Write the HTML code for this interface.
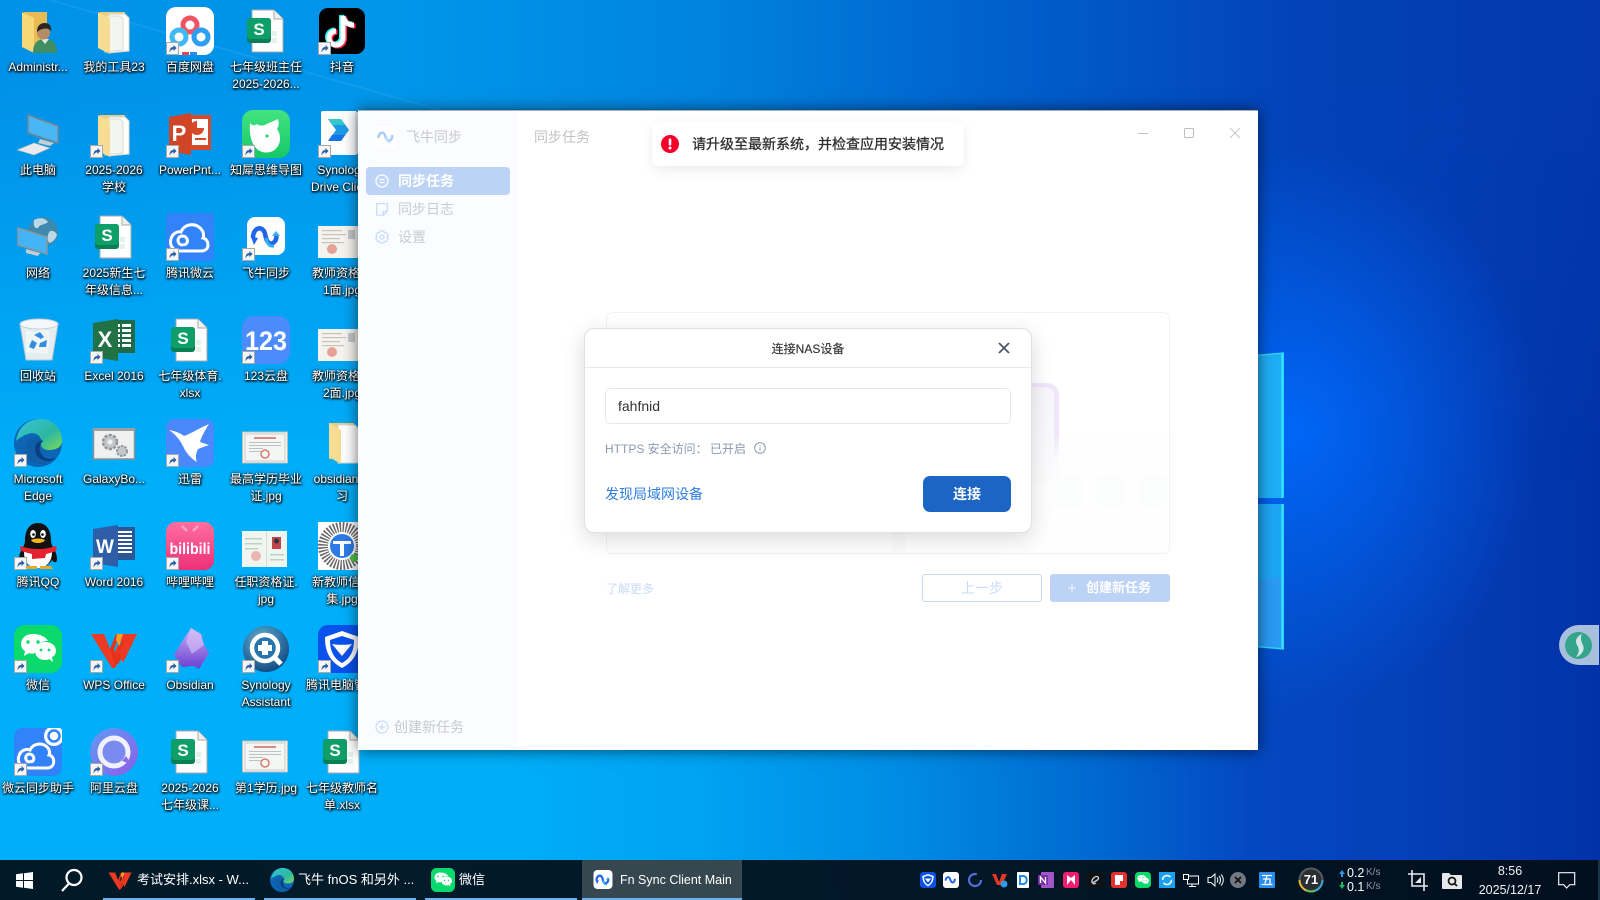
<!DOCTYPE html>
<html><head><meta charset="utf-8"><title>Fn Sync Client Main</title>
<style>
html,body{margin:0;padding:0;width:1600px;height:900px;overflow:hidden}
body{position:relative;font-family:"Liberation Sans","Noto Sans CJK SC",sans-serif;font-size:12px;
background:linear-gradient(90deg,#00aefa 0,#00aef8 500px,#00a2f2 700px,#008ce4 900px,#0068d0 1100px,#0448c0 1250px,#0440b8 1400px,#0232a8 1600px);}
.a{position:absolute}
svg{position:absolute;display:block;overflow:visible}
.l{position:absolute;width:76px;text-align:center;color:#fff;font-size:12px;line-height:17px;text-shadow:0 1px 2px #000,1px 1px 2px #000,0 0 3px rgba(0,0,0,.8);white-space:nowrap}
.t{position:absolute;white-space:nowrap}
.tb{position:absolute;top:860px;height:38px;border-bottom:2px solid #6cb1ea;color:#fff;font-size:13px;line-height:38px}
</style></head><body>
<div class="a" style="left:0;top:0;width:1600px;height:500px;background:linear-gradient(90deg,#0092e8 0,#0096ea 400px,#0084e0 700px,#0060cc 1000px,#0342b8 1300px,#0338ae 1600px);-webkit-mask-image:linear-gradient(180deg,#000 0,#000 90px,transparent 480px);mask-image:linear-gradient(180deg,#000 0,#000 90px,transparent 480px)"></div>
<div class="a" style="left:1040px;top:150px;width:500px;height:560px;background:radial-gradient(ellipse 250px 280px at 250px 280px,rgba(0,104,250,.95),rgba(0,100,240,0) 100%)"></div>
<svg width="0" height="0" style="position:absolute">
<defs>
<linearGradient id="gw" x1="0" y1="0" x2="0" y2="1"><stop offset="0" stop-color="#42e37f"/><stop offset="1" stop-color="#16c868"/></linearGradient>
<linearGradient id="gb" x1="0" y1="0" x2="0" y2="1"><stop offset="0" stop-color="#ff6f9f"/><stop offset="1" stop-color="#ee2f78"/></linearGradient>
<linearGradient id="ge" x1="0" y1="0" x2="1" y2="1"><stop offset="0" stop-color="#36c5d8"/><stop offset=".6" stop-color="#2cb7a0"/><stop offset="1" stop-color="#7cdc55"/></linearGradient>
<linearGradient id="gob" x1="0" y1="0" x2="0" y2="1"><stop offset="0" stop-color="#c7aef5"/><stop offset="1" stop-color="#6a3fd0"/></linearGradient>
<radialGradient id="gsa" cx=".4" cy=".3" r=".8"><stop offset="0" stop-color="#5fb1d6"/><stop offset="1" stop-color="#0b3f78"/></radialGradient>
<linearGradient id="gal" x1="0" y1="0" x2="1" y2="1"><stop offset="0" stop-color="#5e9cf2"/><stop offset="1" stop-color="#8c5de8"/></linearGradient>
<symbol id="sc" viewBox="0 0 13 13"><rect x=".5" y=".5" width="12" height="12" fill="#f4f6f8" stroke="#a8a8a8"/><path d="M3.500 10.500c0-4 1.500-5.500 4-5.500V3l3 3-3 3V7.200c-1.700 0-3 1-4 3.300z" fill="#2d5ea5"/></symbol>
<symbol id="ufolder" viewBox="0 0 48 48"><path d="M10 5h23v34H10z" fill="#e8bc55"/><path d="M8 5l12 6v35L8 40z" fill="#f6d878"/><path d="M19 46c0-9 4-14 12-14s12 5 12 14z" fill="#3f8f63"/><path d="M27 32l4 5 4-5z" fill="#dfe8df"/><circle cx="29.500" cy="26" r="6.500" fill="#b58c66"/><path d="M23 25c0-7 4-9 8-9s7 3 6 8c-2-3-8-4-14 1z" fill="#2b2720"/></symbol>
<symbol id="dfolder" viewBox="0 0 48 48"><path d="M10 5h25v36H10z" fill="#eccb76"/><path d="M19 7h16l4 4v33l-20 2z" fill="#fdfdfb" stroke="#d8d8d0"/><path d="M15 9h15l3 3v31l-18 2z" fill="#f3f5f2" stroke="#dcdcd4"/><path d="M8 5l12 6v36L8 41z" fill="#f7dc93"/></symbol>
<symbol id="sfile" viewBox="0 0 48 48"><path d="M10 3h22l9 9v33H10z" fill="#fff" stroke="#a9a9a9"/><path d="M32 3v9h9" fill="#eef0ee" stroke="#a9a9a9"/><rect x="30" y="24" width="5" height="5" fill="#e2f2ea"/><rect x="30" y="31" width="5" height="5" fill="#e2f2ea"/><rect x="5" y="11" width="24" height="25" rx="3" fill="#097f53"/><rect x="5" y="11" width="24" height="21" rx="3" fill="#0e9f68"/><text x="17" y="28" fill="#fff" font-family="Liberation Sans" font-size="17" font-weight="bold" text-anchor="middle">S</text></symbol>
<symbol id="baidu" viewBox="0 0 48 48"><rect width="48" height="48" rx="10" fill="#fff"/><circle cx="24" cy="18" r="7" fill="none" stroke="#ee5462" stroke-width="5"/><circle cx="13" cy="30" r="7" fill="none" stroke="#3fb8f3" stroke-width="5"/><circle cx="35" cy="30" r="7" fill="none" stroke="#2c9ff2" stroke-width="5"/><rect x="16" y="45" width="7" height="3" fill="#e9435a"/><rect x="24" y="45" width="7" height="3" fill="#2b8cf0"/></symbol>
<symbol id="tiktok" viewBox="0 0 48 48"><rect x="1" y="1" width="46" height="46" rx="9" fill="#000"/><g fill="none" stroke-width="5"><path d="M25 9v22a7 7 0 1 1-7-7M25 9c1 6 5 9 11 9" stroke="#25f4ee" transform="translate(-1.500 -1)"/><path d="M25 9v22a7 7 0 1 1-7-7M25 9c1 6 5 9 11 9" stroke="#fe2c55" transform="translate(1.500 1)"/><path d="M25 9v22a7 7 0 1 1-7-7M25 9c1 6 5 9 11 9" stroke="#fff"/></g></symbol>
<symbol id="ppt" viewBox="0 0 48 48"><rect x="22" y="5" width="23" height="35" fill="#d8492a"/><rect x="26" y="9" width="16" height="26" fill="#fff"/><path d="M31 11a7 7 0 1 0 7 7h-7z" fill="#d8492a"/><rect x="29" y="28" width="11" height="2" fill="#d8492a"/><path d="M3 7l22-4v42L3 41z" fill="#cf4526"/><text x="13" y="31" fill="#fff" font-family="Liberation Sans" font-size="22" font-weight="bold" text-anchor="middle">P</text></symbol>
<symbol id="rhino" viewBox="0 0 48 48"><rect width="48" height="48" rx="11" fill="url(#gw)"/><path d="M8 13c3 3 4 3 7 1 2 2 5 2 8 1 3-2 7-3 13-6 1 4 1 7-1 10 5 7 4 17-4 22-4 2-10 2-13 0C10 37 7 26 8 13z" fill="#fff"/><circle cx="25" cy="26" r="1.500" fill="#1cc86a"/></symbol>
<symbol id="sdrive" viewBox="0 0 48 48"><rect x="3" y="1" width="36" height="44" rx="2" fill="#fff"/><rect x="37" y="2" width="6" height="42" fill="#e8edf0"/><path d="M10 9h13l8 11-8 11H10l8-11z" fill="#1c9ae6"/><path d="M10 9h13l4 6H14z" fill="#35c7c8"/><path d="M10 31h13l4-6H14z" fill="#1873e8"/></symbol>
<symbol id="cloudb" viewBox="0 0 48 48"><rect width="48" height="48" fill="#3283fa" rx="3"/><path d="M14 38C7 38 3 32 5 26c1-5 6-8 10-7 3-8 14-10 20-3 3 3 3 7 2 9 6 1 8 13-2 13zM17 32c-6 0-7-8-1-9 5 0 7 5 4 8-1 1-3 .500-3-.5" fill="none" stroke="#fff" stroke-width="3"/></symbol>
<symbol id="fn" viewBox="0 0 48 48"><rect x="5" y="4" width="38" height="38" rx="8" fill="#fff"/><path d="M11 25c0-8 5-11 9-9 3 2 3 5 4 9s4 7 7 5c3-2 4-5 3-9" fill="none" stroke="#2166e8" stroke-width="4.500"/><path d="M30 23l4-5 4 5z" fill="#38aef2"/><path d="M24 25c1 5 3 9 8 8" fill="none" stroke="#38aef2" stroke-width="3"/><path d="M9 24l3 8 4-7z" fill="#2166e8"/></symbol>
<symbol id="pc" viewBox="0 0 48 48"><path d="M14 5l30 11v17L14 23z" fill="#49b6f8" stroke="#77858e" stroke-width="1.500"/><path d="M26 29l14 4-4 3-12-3z" fill="#c9cdd0"/><path d="M3 40l17-7 16 5-16 7z" fill="#e8eaec" stroke="#a8aeb2" stroke-width=".6"/></symbol>
<symbol id="net" viewBox="0 0 48 48"><circle cx="29" cy="19" r="15" fill="#3f89ac"/><path d="M20 7c6-3 11-2 14 2-3 3-8 2-10 6-3 1-5-2-4-8zM36 18c3-1 6 1 7 4-2 5-4 7-8 8-2-4-2-8 1-12z" fill="#bcd8e4"/><path d="M4 15l29 9v17L4 32z" fill="#45b4f7" stroke="#8b979f" stroke-width="1.500"/><path d="M12 36l14 4-2 3-12-3z" fill="#c9cdd0"/></symbol>
<symbol id="bin" viewBox="0 0 48 48"><path d="M6 8h38l-6 36H12z" fill="#e4edf2" stroke="#b8c6cf"/><ellipse cx="25" cy="8" rx="19" ry="5" fill="#f5f8fa" stroke="#c4cfd6"/><path d="M12 14l10 3 4-4 10 3-2 22-22-2z" fill="#f2f6f9" opacity=".8"/><path d="M20 19l6-3 4 5-3 2zM18 24l5 3-3 6-5-2zM33 24l-1 7h-7l1-4z" fill="#2f8fdc"/></symbol>
<symbol id="xl" viewBox="0 0 48 48"><rect x="22" y="4" width="23" height="33" fill="#1c6b46"/><g fill="#fff"><rect x="25" y="8" width="5" height="3"/><rect x="32" y="8" width="9" height="3"/><rect x="25" y="13" width="5" height="3"/><rect x="32" y="13" width="9" height="3"/><rect x="25" y="18" width="5" height="3"/><rect x="32" y="18" width="9" height="3"/><rect x="25" y="23" width="5" height="3"/><rect x="32" y="23" width="9" height="3"/><rect x="25" y="28" width="5" height="3"/><rect x="32" y="28" width="9" height="3"/></g><path d="M3 7l25-4v42L3 41z" fill="#217346"/><text x="15" y="31" fill="#fff" font-family="Liberation Sans" font-size="22" font-weight="bold" text-anchor="middle">X</text></symbol>
<symbol id="wd" viewBox="0 0 48 48"><rect x="22" y="5" width="23" height="33" fill="#2b5797"/><g fill="#fff"><rect x="27" y="9" width="15" height="2"/><rect x="27" y="13" width="15" height="2"/><rect x="27" y="17" width="15" height="2"/><rect x="27" y="21" width="15" height="2"/><rect x="27" y="25" width="15" height="2"/><rect x="27" y="29" width="15" height="2"/></g><path d="M3 7l25-4v42L3 41z" fill="#2f5ea8"/><text x="15" y="31" fill="#fff" font-family="Liberation Sans" font-size="19" font-weight="bold" text-anchor="middle">W</text></symbol>
<symbol id="p123" viewBox="0 0 48 48"><rect width="48" height="48" rx="12" fill="#4c8bfb"/><text x="24" y="34" fill="#fff" font-family="Liberation Sans" font-size="27" font-weight="bold" text-anchor="middle" textLength="42" lengthAdjust="spacingAndGlyphs">123</text></symbol>
<symbol id="edge" viewBox="0 0 48 48"><circle cx="24" cy="24" r="24" fill="#0c65b6"/><path d="M2 22C4 8 14 0 26 0c13 0 22 9 22 22 0 6-6 9-13 9-5 0-8-2-8-6 2-8-6-13-13-10C8 17 4 20 2 22z" fill="url(#ge)"/><path d="M17 42c-8-6-8-17-1-22 5-3 10-2 13 2-3 2-5 5-4 9 1 7 9 10 16 7-6 8-16 9-24 4z" fill="#0f5fa8"/><path d="M21 30c0 7 6 12 14 12 3 0 5-1 7-3-7 3-14 0-16-7-1-4 0-7 3-10-4-1-8 3-8 8z" fill="#0a3e7e"/></symbol>
<symbol id="galaxy" viewBox="0 0 48 48"><rect x="3.500" y="10" width="41" height="30" fill="#f0f0f0" stroke="#8a9296" stroke-width="1.500"/><rect x="3" y="9" width="42" height="3" fill="#9aa0a4"/><circle cx="20" cy="23" r="7" fill="#c4c8ca" stroke="#90969a" stroke-width="2.500" stroke-dasharray="3 1.500"/><circle cx="20" cy="23" r="2.500" fill="#f0f0f0"/><circle cx="32" cy="32" r="5" fill="#c4c8ca" stroke="#90969a" stroke-width="2" stroke-dasharray="2.500 1.200"/></symbol>
<symbol id="xun" viewBox="0 0 48 48"><rect width="48" height="48" rx="8" fill="#4a88fb"/><path d="M3 11c6 1 11 3 15 6 6-2 12-6 25-12-5 8-8 14-9 18l9 3-11 4c-2 4-3 9-1 13-5-3-9-7-12-12-3-6-6-13-16-20z" fill="#fff"/></symbol>
<symbol id="cert" viewBox="0 0 48 48"><rect x=".5" y="13" width="45" height="31" fill="#f4f6f4" stroke="#b8bcb8"/><rect x="3" y="15" width="40" height="27" fill="none" stroke="#c8ccc8"/><rect x="12" y="18" width="22" height="2" fill="#d98a82"/><g fill="#bcc2c4"><rect x="7" y="23" width="32" height="1"/><rect x="7" y="26" width="32" height="1"/><rect x="7" y="29" width="14" height="1"/><rect x="7" y="32" width="14" height="1"/></g><circle cx="23" cy="35" r="4" fill="none" stroke="#dc7a70" stroke-width="1.500"/></symbol>
<symbol id="cert2" viewBox="0 0 48 48"><rect y="13" width="48" height="32" fill="#f5f3ee"/><g fill="#c5c3bc"><rect x="4" y="17" width="20" height="1.200"/><rect x="4" y="21" width="24" height="1.200"/><rect x="4" y="25" width="18" height="1.200"/><rect x="4" y="29" width="22" height="1.200"/></g><circle cx="14" cy="36" r="5" fill="#e4a396"/><rect x="30" y="17" width="7" height="9" fill="#c2c8cc"/></symbol>
<symbol id="idc" viewBox="0 0 48 48"><rect x="0" y="9" width="45" height="36" fill="#f1f5f2"/><rect x="24" y="9" width="1" height="36" fill="#d6dcd8"/><rect x="30" y="15" width="9" height="12" fill="#c0454c"/><circle cx="34.500" cy="19" r="2.500" fill="#2a3642"/><g fill="#b9d2c6"><rect x="3" y="16" width="17" height="1.500"/><rect x="3" y="21" width="17" height="1.500"/><rect x="3" y="26" width="13" height="1.500"/><rect x="28" y="32" width="14" height="1.500"/><rect x="28" y="37" width="14" height="1.500"/></g><circle cx="14" cy="34" r="5" fill="#e7b6ae"/></symbol>
<symbol id="qrc" viewBox="0 0 48 48"><rect x="0" y="0" width="48" height="48" fill="#fff"/><circle cx="24" cy="24" r="19" fill="none" stroke="#666" stroke-width="10" stroke-dasharray="1.500 1.500"/><circle cx="24" cy="24" r="12" fill="#2d7be8"/><path d="M15 19h18v3h-7v12h-4V22h-7z" fill="#fff"/><circle cx="36" cy="36" r="4" fill="#4fc048"/></symbol>
<symbol id="xfolder" viewBox="0 0 48 48"><path d="M3 2h25v36H3z" fill="#eccb76"/><path d="M12 4h17l4 4v34H12z" fill="#fff" stroke="#d4d8da"/><path d="M3 2l12 7v34L3 36z" fill="#f7dc93"/></symbol>
<symbol id="qq" viewBox="0 0 48 48"><path d="M24 1c-9 0-13 8-13 17 0 4-1 5-3 9-3 5-4 12-2 13s3-1 4-2c3 5 8 8 14 8s11-3 14-8c1 1 2 3 4 2s1-8-2-13c-2-4-3-5-3-9 0-9-4-17-13-17z" fill="#111"/><path d="M10 30c0 12 7 16 14 16s14-5 14-16c-5-3-23-3-28 0z" fill="#fff"/><ellipse cx="19" cy="12" rx="2.800" ry="4" fill="#fff"/><ellipse cx="29" cy="12" rx="2.800" ry="4" fill="#fff"/><circle cx="19.500" cy="12.500" r="1.300"/><circle cx="28.500" cy="12.500" r="1.300"/><path d="M17 18c3-2 11-2 14 0-2 4-12 4-14 0z" fill="#f5b31e"/><path d="M7 24c10 4 24 4 34 0 2 1 2 3 1 5-2 1-6 2-10 3l-1 4-13 1v-5c-4-1-8-2-11-3-1-2-1-4 0-5z" fill="#e52230"/><path d="M12 44h11v3H10zM26 44h11l2 3H26z" fill="#f5a51e"/></symbol>
<symbol id="bili" viewBox="0 0 48 48"><rect width="48" height="48" rx="10" fill="url(#gb)"/><path d="M16 4l5 5M32 4l-5 5" stroke="#f8a4c4" stroke-width="2.500"/><text x="24" y="32" fill="#fff" font-family="Liberation Sans" font-size="16" font-weight="bold" text-anchor="middle" textLength="41" lengthAdjust="spacingAndGlyphs">bilibili</text></symbol>
<symbol id="wx" viewBox="0 0 48 48"><rect width="48" height="48" rx="11" fill="#0ad96c"/><path d="M19 9C10 9 7 15 7 19c0 3 2 6 4 7l-1 5 5-3c2 1 4 1 6 0-1-7 4-12 13-12-2-4-8-7-15-7z" fill="#fff"/><path d="M31 17c-7 0-10 4-10 9s4 9 10 9c1 0 3 0 4-1l4 3-1-5c3-1 4-4 4-6 0-5-4-9-11-9z" fill="#fff"/><circle cx="14" cy="17" r="1.700" fill="#0ad96c"/><circle cx="24" cy="17" r="1.700" fill="#0ad96c"/><circle cx="27" cy="25" r="1.400" fill="#0ad96c"/><circle cx="35" cy="25" r="1.400" fill="#0ad96c"/></symbol>
<symbol id="wps" viewBox="0 0 48 48"><path d="M1 9h13l9 22 6-14 4 11-8 15h-3z" fill="#ee3a22"/><path d="M47 9H34l-8 22-2-7 6-15h-4l-6 15 5 15h3z" fill="#e4321a"/><path d="M30 9h17L33 38l-4-10 6-12h-5z" fill="#ee3a22"/><path d="M27 9h6l-4 12-3-6z" fill="#f6a125"/></symbol>
<symbol id="obs" viewBox="0 0 48 48"><path d="M25 3l10 6 3 11 5 8-10 16-5-3-12 1-8-12 9-15z" fill="url(#gob)"/><path d="M25 3l-5 14 6 12 12-9-3-11z" fill="#d8c7fa" opacity=".6"/></symbol>
<symbol id="sa" viewBox="0 0 48 48"><circle cx="24" cy="24" r="23" fill="url(#gsa)"/><circle cx="23" cy="23" r="13" fill="#2674ad" stroke="#fff" stroke-width="4.500"/><path d="M20 16h6v4h4v6h-4v4h-6v-4h-4v-6h4z" fill="#fff"/><path d="M32 32l7 7" stroke="#fff" stroke-width="5"/></symbol>
<symbol id="tenc" viewBox="0 0 48 48"><rect width="48" height="48" rx="10" fill="#0a52ec"/><path d="M24 6l17 6c0 14-4 24-17 31C11 36 7 26 7 12z" fill="#fff"/><path d="M24 11l12 4c0 10-3 18-12 23-9-5-12-13-12-23z" fill="#0a52ec"/><path d="M14 19c6 1 14 1 20 0l-10 12z" fill="#fff"/></symbol>
<symbol id="wysync" viewBox="0 0 48 48"><rect width="48" height="48" rx="9" fill="#3283fa"/><path d="M13 40C6 40 3 33 5 28c1-5 7-8 11-6 3-7 13-8 18-2 2 3 2 5 1 7 6 1 7 12-1 13zM16 34c-5 0-6-7-1-8 4 0 6 4 4 7-1 1-2 1-3-.5" fill="none" stroke="#fff" stroke-width="3"/><circle cx="40" cy="8" r="10" fill="#fff"/><circle cx="40" cy="8" r="5.500" fill="none" stroke="#3283fa" stroke-width="2.500"/></symbol>
<symbol id="ali" viewBox="0 0 48 48"><circle cx="24" cy="24" r="24" fill="url(#gal)"/><circle cx="24" cy="24" r="14" fill="#7a8bf0" stroke="#f0f0ff" stroke-width="5"/><path d="M32 33l9 3-5-8z" fill="#8c6de8"/></symbol>
</defs></svg>

<!-- top-left light streak and Windows logo behind window -->
<svg style="left:0;top:0" width="1600" height="900">
<path d="M50 0L440 110" stroke="#fff" stroke-opacity=".07" stroke-width="2"/>
<path d="M1250 356L1284 353V498H1250z" fill="#1eaef5"/>
<path d="M1250 504H1284V649L1250 646z" fill="#2a9af3"/>
<path d="M1250 580L1284 577V504H1250z" fill="#1aa8f3" opacity=".8"/>
<path d="M1282.500 353V498M1282.500 504V649" stroke="#2ee4fb" stroke-width="2.500"/>
<path d="M1250 356L1284 353M1250 646L1284 649" stroke="#2cd4f8" stroke-width="1.500"/>
</svg>

<!-- desktop icons: columns 14,90,166,242,318 rows 7,110,213,316,419,522,625,728 -->
<svg width="48" height="48" style="left:14px;top:7px"><use href="#ufolder"/></svg>
<svg width="48" height="48" style="left:90px;top:7px"><use href="#dfolder"/></svg>
<svg width="48" height="48" style="left:166px;top:7px"><use href="#baidu"/></svg>
<svg width="48" height="48" style="left:242px;top:7px"><use href="#sfile"/></svg>
<svg width="48" height="48" style="left:318px;top:7px"><use href="#tiktok"/></svg>

<svg width="48" height="48" style="left:14px;top:110px"><use href="#pc"/></svg>
<svg width="48" height="48" style="left:90px;top:110px"><use href="#dfolder"/></svg>
<svg width="48" height="48" style="left:166px;top:110px"><use href="#ppt"/></svg>
<svg width="48" height="48" style="left:242px;top:110px"><use href="#rhino"/></svg>
<svg width="48" height="48" style="left:318px;top:110px"><use href="#sdrive"/></svg>

<svg width="48" height="48" style="left:14px;top:213px"><use href="#net"/></svg>
<svg width="48" height="48" style="left:90px;top:213px"><use href="#sfile"/></svg>
<svg width="48" height="48" style="left:166px;top:213px"><use href="#cloudb"/></svg>
<svg width="48" height="48" style="left:242px;top:213px"><use href="#fn"/></svg>
<svg width="48" height="48" style="left:318px;top:213px"><use href="#cert2"/></svg>

<svg width="48" height="48" style="left:14px;top:316px"><use href="#bin"/></svg>
<svg width="48" height="48" style="left:90px;top:316px"><use href="#xl"/></svg>
<svg width="48" height="48" style="left:166px;top:316px"><use href="#sfile"/></svg>
<svg width="48" height="48" style="left:242px;top:316px"><use href="#p123"/></svg>
<svg width="48" height="48" style="left:318px;top:316px"><use href="#cert2"/></svg>

<svg width="48" height="48" style="left:14px;top:419px"><use href="#edge"/></svg>
<svg width="48" height="48" style="left:90px;top:419px"><use href="#galaxy"/></svg>
<svg width="48" height="48" style="left:166px;top:419px"><use href="#xun"/></svg>
<svg width="48" height="48" style="left:242px;top:419px"><use href="#cert"/></svg>
<svg width="48" height="48" style="left:326px;top:421px"><use href="#xfolder"/></svg>

<svg width="48" height="48" style="left:14px;top:522px"><use href="#qq"/></svg>
<svg width="48" height="48" style="left:90px;top:522px"><use href="#wd"/></svg>
<svg width="48" height="48" style="left:166px;top:522px"><use href="#bili"/></svg>
<svg width="48" height="48" style="left:242px;top:522px"><use href="#idc"/></svg>
<svg width="48" height="48" style="left:318px;top:522px"><use href="#qrc"/></svg>

<svg width="48" height="48" style="left:14px;top:625px"><use href="#wx"/></svg>
<svg width="48" height="48" style="left:90px;top:625px"><use href="#wps"/></svg>
<svg width="48" height="48" style="left:166px;top:625px"><use href="#obs"/></svg>
<svg width="48" height="48" style="left:242px;top:625px"><use href="#sa"/></svg>
<svg width="48" height="48" style="left:318px;top:625px"><use href="#tenc"/></svg>

<svg width="48" height="48" style="left:14px;top:728px"><use href="#wysync"/></svg>
<svg width="48" height="48" style="left:90px;top:728px"><use href="#ali"/></svg>
<svg width="48" height="48" style="left:166px;top:728px"><use href="#sfile"/></svg>
<svg width="48" height="48" style="left:242px;top:728px"><use href="#cert"/></svg>
<svg width="48" height="48" style="left:318px;top:728px"><use href="#sfile"/></svg>

<!-- shortcut arrows -->
<svg width="13" height="13" style="left:166px;top:42px"><use href="#sc"/></svg>
<svg width="13" height="13" style="left:318px;top:42px"><use href="#sc"/></svg>
<svg width="13" height="13" style="left:90px;top:145px"><use href="#sc"/></svg>
<svg width="13" height="13" style="left:166px;top:145px"><use href="#sc"/></svg>
<svg width="13" height="13" style="left:242px;top:145px"><use href="#sc"/></svg>
<svg width="13" height="13" style="left:318px;top:145px"><use href="#sc"/></svg>
<svg width="13" height="13" style="left:166px;top:248px"><use href="#sc"/></svg>
<svg width="13" height="13" style="left:242px;top:248px"><use href="#sc"/></svg>
<svg width="13" height="13" style="left:90px;top:351px"><use href="#sc"/></svg>
<svg width="13" height="13" style="left:242px;top:351px"><use href="#sc"/></svg>
<svg width="13" height="13" style="left:14px;top:454px"><use href="#sc"/></svg>
<svg width="13" height="13" style="left:166px;top:454px"><use href="#sc"/></svg>
<svg width="13" height="13" style="left:14px;top:557px"><use href="#sc"/></svg>
<svg width="13" height="13" style="left:90px;top:557px"><use href="#sc"/></svg>
<svg width="13" height="13" style="left:166px;top:557px"><use href="#sc"/></svg>
<svg width="13" height="13" style="left:14px;top:660px"><use href="#sc"/></svg>
<svg width="13" height="13" style="left:90px;top:660px"><use href="#sc"/></svg>
<svg width="13" height="13" style="left:166px;top:660px"><use href="#sc"/></svg>
<svg width="13" height="13" style="left:242px;top:660px"><use href="#sc"/></svg>
<svg width="13" height="13" style="left:318px;top:660px"><use href="#sc"/></svg>
<svg width="13" height="13" style="left:14px;top:763px"><use href="#sc"/></svg>
<svg width="13" height="13" style="left:90px;top:763px"><use href="#sc"/></svg>

<!-- labels -->
<div class="l" style="left:0;top:59px">Administr...</div>
<div class="l" style="left:76px;top:59px">我的工具23</div>
<div class="l" style="left:152px;top:59px">百度网盘</div>
<div class="l" style="left:228px;top:59px">七年级班主任<br>2025-2026...</div>
<div class="l" style="left:304px;top:59px">抖音</div>

<div class="l" style="left:0;top:162px">此电脑</div>
<div class="l" style="left:76px;top:162px">2025-2026<br>学校</div>
<div class="l" style="left:152px;top:162px">PowerPnt...</div>
<div class="l" style="left:228px;top:162px">知犀思维导图</div>
<div class="l" style="left:304px;top:162px">Synology<br>Drive Client</div>

<div class="l" style="left:0;top:265px">网络</div>
<div class="l" style="left:76px;top:265px">2025新生七<br>年级信息...</div>
<div class="l" style="left:152px;top:265px">腾讯微云</div>
<div class="l" style="left:228px;top:265px">飞牛同步</div>
<div class="l" style="left:304px;top:265px">教师资格证<br>1面.jpg</div>

<div class="l" style="left:0;top:368px">回收站</div>
<div class="l" style="left:76px;top:368px">Excel 2016</div>
<div class="l" style="left:152px;top:368px">七年级体育.<br>xlsx</div>
<div class="l" style="left:228px;top:368px">123云盘</div>
<div class="l" style="left:304px;top:368px">教师资格证<br>2面.jpg</div>

<div class="l" style="left:0;top:471px">Microsoft<br>Edge</div>
<div class="l" style="left:76px;top:471px">GalaxyBo...</div>
<div class="l" style="left:152px;top:471px">迅雷</div>
<div class="l" style="left:228px;top:471px">最高学历毕业<br>证.jpg</div>
<div class="l" style="left:304px;top:471px">obsidian学<br>习</div>

<div class="l" style="left:0;top:574px">腾讯QQ</div>
<div class="l" style="left:76px;top:574px">Word 2016</div>
<div class="l" style="left:152px;top:574px">哔哩哔哩</div>
<div class="l" style="left:228px;top:574px">任职资格证.<br>jpg</div>
<div class="l" style="left:304px;top:574px">新教师信息<br>集.jpg</div>

<div class="l" style="left:0;top:677px">微信</div>
<div class="l" style="left:76px;top:677px">WPS Office</div>
<div class="l" style="left:152px;top:677px">Obsidian</div>
<div class="l" style="left:228px;top:677px">Synology<br>Assistant</div>
<div class="l" style="left:304px;top:677px">腾讯电脑管家</div>

<div class="l" style="left:0;top:780px">微云同步助手</div>
<div class="l" style="left:76px;top:780px">阿里云盘</div>
<div class="l" style="left:152px;top:780px">2025-2026<br>七年级课...</div>
<div class="l" style="left:228px;top:780px">第1学历.jpg</div>
<div class="l" style="left:304px;top:780px">七年级教师名<br>单.xlsx</div>

<!-- floating widget -->
<div class="a" style="left:1559px;top:625px;width:40px;height:40px;background:#a9bfde;border-radius:20px 0 0 20px"></div>
<svg style="left:1565px;top:632px" width="27" height="27" viewBox="0 0 27 27"><circle cx="13.500" cy="13.500" r="13.500" fill="#34a58b"/><path d="M17 2c-6 3-7 7-5 11 2 3 3 7-1 12 6-2 9-7 7-12-2-4-3-7-1-11z" fill="#d5e6e8"/></svg>

<!-- app window -->
<div class="a" style="left:358px;top:110px;width:900px;height:640px;background:#fff;border-top:1px solid #a9adb3;box-sizing:border-box;box-shadow:0 0 14px rgba(0,0,0,.6)"></div>
<div class="a" style="left:358px;top:111px;width:159px;height:639px;background:#fbfcff"></div>

<svg style="left:374px;top:125px" width="24" height="24" viewBox="0 0 48 48"><rect x="1" y="1" width="46" height="46" rx="9" fill="#fff" stroke="#f2f5fb"/><path d="M9 26c0-9 6-12 10-10 3 2 3 6 5 10s5 7 8 5c3-2 5-6 4-11" fill="none" stroke="#a9cdf6" stroke-width="5"/><path d="M24 26c1 6 4 9 9 8" fill="none" stroke="#c6e4fa" stroke-width="3.500"/></svg>
<div class="t" style="left:406px;top:127px;font-size:14px;line-height:20px;color:#c8c9cb">飞牛同步</div>
<div class="t" style="left:534px;top:127px;font-size:14px;line-height:20px;color:#bfc1c4">同步任务</div>

<div class="a" style="left:366px;top:167px;width:144px;height:28px;background:#bcd3f6;border-radius:4px"></div>
<svg style="left:375px;top:174px" width="14" height="14" viewBox="0 0 14 14" fill="none" stroke="#fff" stroke-width="1.300"><circle cx="7" cy="7" r="6"/><path d="M4.500 5.500h5M4.500 8.500h5"/></svg>
<div class="t" style="left:398px;top:171px;font-size:14px;line-height:20px;color:#fff;font-weight:bold">同步任务</div>
<svg style="left:376px;top:203px" width="12" height="13" viewBox="0 0 12 13" fill="none" stroke="#c5dbf9" stroke-width="1.200"><path d="M.7.7h10.600v7.500l-4 4H.7zM7.300 12.200V8.200h4"/></svg>
<div class="t" style="left:398px;top:199px;font-size:14px;line-height:20px;color:#c9cbcd">同步日志</div>
<svg style="left:375px;top:230px" width="14" height="14" viewBox="0 0 14 14" fill="none" stroke="#c5dbf9" stroke-width="1.200"><path d="M5.200 1h3.600l.7 1.800 1.900-.3 1.800 3-1.200 1.500 1.200 1.500-1.800 3-1.900-.3-.7 1.800H5.200l-.7-1.800-1.900.3-1.800-3L2 7 .8 5.500l1.800-3 1.900.3z" stroke-linejoin="round"/><circle cx="7" cy="7" r="2"/></svg>
<div class="t" style="left:398px;top:227px;font-size:14px;line-height:20px;color:#c9cbcd">设置</div>
<svg style="left:375px;top:720px" width="14" height="14" viewBox="0 0 14 14" fill="none" stroke="#c5dbf9" stroke-width="1.200"><circle cx="7" cy="7" r="6"/><path d="M4 7h6M7 4v6"/></svg>
<div class="t" style="left:394px;top:717px;font-size:14px;line-height:20px;color:#c8c9cb">创建新任务</div>

<!-- window controls -->
<svg style="left:1130px;top:125px" width="120" height="16" fill="none"><path d="M8 8.500h10" stroke="#c4c4c4"/><rect x="54.500" y="3.500" width="9" height="9" rx="1" stroke="#bdbdbd"/><path d="M100 3l10 10M110 3l-10 10" stroke="#c8c8c8"/></svg>

<!-- faded page contents -->
<div class="a" style="left:606px;top:312px;width:564px;height:242px;box-sizing:border-box;border:1px solid #f1f2f5;border-radius:6px;background:#fff"></div>
<div class="a" style="left:607px;top:438px;width:562px;height:115px;background:#fefefe;border-radius:0 0 6px 6px"></div>
<div class="a" style="left:892px;top:532px;width:13px;height:21px;background:#fafbfb"></div>
<div class="a" style="left:1000px;top:383px;width:59px;height:101px;box-sizing:border-box;border-radius:0 12px 10px 0;background:linear-gradient(180deg,#efe6fb 0,#efe6fb 50%,#fbfafd 75%,#fcfcfd 100%)"></div>
<div class="a" style="left:1000px;top:387px;width:54px;height:97px;border-radius:0 8px 8px 0;background:linear-gradient(180deg,#f7f6fb,#fcfcfd)"></div>
<div class="a" style="left:1052px;top:477px;width:30px;height:29px;background:#fbfcfc;border-radius:6px"></div>
<div class="a" style="left:1096px;top:477px;width:30px;height:29px;background:#fbfcfc;border-radius:6px"></div>
<div class="a" style="left:1140px;top:477px;width:28px;height:29px;background:#fbfcfc;border-radius:6px"></div>
<div class="t" style="left:606px;top:580px;font-size:12px;line-height:18px;color:#c9dbf7">了解更多</div>
<div class="a" style="left:922px;top:574px;width:120px;height:28px;box-sizing:border-box;border:1px solid #c4d8f7;border-radius:3px;text-align:center;font-size:14px;line-height:27px;color:#c9dbf7">上一步</div>
<div class="a" style="left:1050px;top:574px;width:120px;height:28px;background:#bcd3f6;border-radius:3px;color:#fff;font-size:13px;line-height:28px;font-weight:bold;text-align:left;text-indent:36px;white-space:nowrap">创建新任务</div>
<svg style="left:1066px;top:582px" width="12" height="12" stroke="#e4eefc" stroke-width="1.300"><path d="M2 6h8M6 2v8"/></svg>

<!-- toast -->
<div class="a" style="left:652px;top:122px;width:312px;height:44px;background:#fff;border-radius:6px;box-shadow:0 4px 12px rgba(0,0,0,.08)"></div>
<svg style="left:661px;top:135px" width="18" height="18" viewBox="0 0 18 18"><circle cx="9" cy="9" r="9" fill="#f5002b"/><rect x="7.700" y="3.500" width="2.600" height="7" rx="1" fill="#fff"/><circle cx="9" cy="13" r="1.500" fill="#fff"/></svg>
<div class="t" style="left:692px;top:134px;font-size:14px;line-height:20px;color:#2e2e2e;-webkit-text-stroke:.3px #2e2e2e">请升级至最新系统，并检查应用安装情况</div>

<!-- dialog -->
<div class="a" style="left:584px;top:328px;width:448px;height:205px;box-sizing:border-box;background:#fff;border:1px solid #dfe1e5;border-radius:10px;box-shadow:0 6px 22px rgba(0,0,0,.14)"></div>
<div class="a" style="left:585px;top:367px;width:446px;height:1px;background:#e6e8ee"></div>
<div class="a" style="left:586px;top:340px;width:444px;text-align:center;font-size:12px;line-height:18px;color:#333;-webkit-text-stroke:.15px #333">连接NAS设备</div>
<svg style="left:998px;top:342px" width="12" height="12" stroke="#4a5264" stroke-width="1.700"><path d="M1 1l10 10M11 1L1 11"/></svg>
<div class="a" style="left:605px;top:388px;width:406px;height:36px;box-sizing:border-box;border:1px solid #e5e8f0;border-radius:5px;padding-left:12px;font-size:14px;line-height:34px;color:#333">fahfnid</div>
<div class="t" style="left:605px;top:440px;font-size:12px;line-height:18px;color:#8c98b0">HTTPS 安全访问：</div>
<div class="t" style="left:710px;top:440px;font-size:12px;line-height:18px;color:#8c98b0">已开启</div>
<svg style="left:754px;top:442px" width="12" height="12" viewBox="0 0 12 12" fill="none" stroke="#8c98b0"><circle cx="6" cy="6" r="5.300"/><path d="M6 5.300v3.500M6 3v1.200"/></svg>
<div class="t" style="left:605px;top:484px;font-size:14px;line-height:20px;color:#2f7de1">发现局域网设备</div>
<div class="a" style="left:923px;top:476px;width:88px;height:36px;background:#1c65c4;border-radius:7px;color:#fff;font-size:14px;font-weight:bold;line-height:36px;text-align:center">连接</div>

<!-- taskbar -->
<div class="a" style="left:0;top:860px;width:1600px;height:40px;background:linear-gradient(90deg,#021a28,#02192a 50%,#020f1e)"></div>
<svg style="left:16px;top:872px" width="17" height="17" fill="#fff"><path d="M0 2.300L7 1.300V8H0zM8 1.200L17 0V8H8zM0 9h7v6.700L0 14.700zM8 9h9v8L8 15.800z"/></svg>
<svg style="left:60px;top:868px" width="24" height="24" fill="none" stroke="#fff" stroke-width="2.200"><circle cx="14" cy="9.500" r="7.500"/><path d="M9 15.500L2 23"/></svg>

<div class="tb" style="left:103px;width:152px"></div>
<svg style="left:108px;top:868px" width="24" height="24"><use href="#wps"/></svg>
<div class="t" style="left:137px;top:861px;font-size:13px;line-height:38px;color:#fff">考试安排.xlsx - W...</div>

<div class="tb" style="left:264px;width:152px"></div>
<svg style="left:270px;top:868px" width="24" height="24"><use href="#edge"/></svg>
<div class="t" style="left:298px;top:861px;font-size:13px;line-height:38px;color:#fff">飞牛 fnOS 和另外 ...</div>

<div class="tb" style="left:425px;width:152px"></div>
<svg style="left:431px;top:868px" width="24" height="24"><use href="#wx"/></svg>
<div class="t" style="left:459px;top:861px;font-size:13px;line-height:38px;color:#fff">微信</div>

<div class="tb" style="left:582px;width:160px;background:#36474f"></div>
<svg style="left:591px;top:868px" width="24" height="24"><use href="#fn"/></svg>
<div class="t" style="left:620px;top:861px;font-size:12.500px;line-height:38px;color:#fff">Fn Sync Client Main</div>

<!-- tray -->
<svg style="left:920px;top:872px" width="16" height="16"><use href="#tenc"/></svg>
<svg style="left:943px;top:872px" width="16" height="16" viewBox="0 0 48 48"><rect width="48" height="48" rx="9" fill="#fff"/><path d="M8 26c0-9 6-12 10-10 3 2 3 6 5 10s5 7 8 5c3-2 5-6 4-11" fill="none" stroke="#2166e8" stroke-width="6"/></svg>
<svg style="left:967px;top:872px" width="16" height="16" fill="none"><circle cx="8" cy="8" r="6" stroke="#4d6fd6" stroke-width="2.200" stroke-dasharray="30 8"/></svg>
<svg style="left:992px;top:872px" width="16" height="16" viewBox="0 0 16 16"><path d="M0 2h4l3 8 3-8h5l-5 11H5z" fill="#e9381f"/><circle cx="12" cy="12" r="3.500" fill="#2e9be8"/></svg>
<svg style="left:1015px;top:872px" width="16" height="16" viewBox="0 0 16 16"><rect x="2" y="0" width="12" height="16" rx="1" fill="#fff"/><path d="M5 4h3c5 0 5 8 0 8H5z" fill="none" stroke="#1c8ae8" stroke-width="2"/></svg>
<svg style="left:1038px;top:872px" width="16" height="16" viewBox="0 0 16 16"><rect x="3" y="0" width="13" height="16" rx="1" fill="#a356c8"/><rect x="0" y="3" width="10" height="10" rx="1" fill="#7a2fa8"/><path d="M2.500 11V5l5 6V5" fill="none" stroke="#fff" stroke-width="1.300"/></svg>
<svg style="left:1063px;top:872px" width="16" height="16" viewBox="0 0 16 16"><rect width="16" height="16" rx="3" fill="#f11c6e"/><path d="M4 3l4 3 4-3v10L8 8l-4 5z" fill="#fff"/></svg>
<svg style="left:1087px;top:872px" width="16" height="16" viewBox="0 0 16 16"><rect width="16" height="16" rx="5" fill="#111"/><path d="M5 11c-1-4 4-8 6-6s-2 4-4 5-1 3 2 1" fill="none" stroke="#cfd8f0" stroke-width="1.300"/></svg>
<svg style="left:1111px;top:872px" width="16" height="16" viewBox="0 0 16 16"><rect width="16" height="16" rx="3" fill="#e5302b"/><path d="M4 3h8v6H9v4H4z" fill="#fff"/></svg>
<svg style="left:1135px;top:872px" width="16" height="16"><use href="#wx"/></svg>
<svg style="left:1159px;top:872px" width="16" height="16" viewBox="0 0 16 16"><rect width="16" height="16" fill="#1ba1f2"/><circle cx="8" cy="8" r="4.500" fill="none" stroke="#fff" stroke-width="1.500" stroke-dasharray="11 3"/></svg>
<svg style="left:1183px;top:872px" width="16" height="16" viewBox="0 0 16 16" fill="none" stroke="#fff"><path d="M.5 2.500h5v5h-5zM5.500 4h10v8h-11V7.500M9 12v2.500M6 14.500h7"/></svg>
<svg style="left:1207px;top:872px" width="17" height="16" viewBox="0 0 17 16" fill="none" stroke="#fff"><path d="M1 5.500h3L8 2v12l-4-3.500H1zM10 5.500c1 1.500 1 3.500 0 5M12 4c2 2.300 2 5.700 0 8M14 2.500c3 3 3 8 0 11"/></svg>
<svg style="left:1230px;top:872px" width="16" height="16" viewBox="0 0 16 16"><circle cx="8" cy="8" r="8" fill="#737880"/><path d="M5 5l6 6M11 5l-6 6" stroke="#111" stroke-width="1.800"/></svg>
<svg style="left:1259px;top:872px" width="16" height="16" viewBox="0 0 16 16"><rect width="16" height="16" rx="1" fill="#2a8ef0"/><path d="M3 3.500h10M8 3.500l-2 8M4 7h7v5M2.500 12.500h11" fill="none" stroke="#fff" stroke-width="1.300"/></svg>

<svg style="left:1298px;top:867px" width="26" height="26" viewBox="0 0 26 26" fill="none"><circle cx="13" cy="13" r="12" fill="#2b2f33"/><circle cx="13" cy="13" r="11.500" stroke="#555b60" stroke-width="2"/><path d="M1.500 13a11.500 11.500 0 0 0 7 10.600" stroke="#e2b93b" stroke-width="2"/><path d="M8.500 23.600a11.500 11.500 0 0 0 9 0" stroke="#5fc85a" stroke-width="2"/><path d="M17.500 23.600a11.500 11.500 0 0 0 7-10.600" stroke="#3ba8d8" stroke-width="2"/></svg>
<div class="t" style="left:1298px;top:867px;width:26px;text-align:center;font-size:13px;line-height:26px;color:#fff;font-weight:bold">71</div>

<svg style="left:1339px;top:868px" width="6" height="24"><path d="M3 2l3 4H4v3H2V6H0z" fill="#2a9be8"/><path d="M3 21l3-4H4v-3H2v3H0z" fill="#19b858"/></svg>
<div class="t" style="left:1347px;top:865px;font-size:12.500px;line-height:16px;color:#fff">0.2</div>
<div class="t" style="left:1366px;top:866px;font-size:10px;line-height:14px;color:#8d959c">K/s</div>
<div class="t" style="left:1347px;top:879px;font-size:12.500px;line-height:16px;color:#fff">0.1</div>
<div class="t" style="left:1366px;top:880px;font-size:10px;line-height:14px;color:#8d959c">K/s</div>

<svg style="left:1408px;top:870px" width="20" height="21" viewBox="0 0 20 21" fill="none" stroke="#e8eaec" stroke-width="1.600"><path d="M4 0v16h16M0 4h16v17"/><path d="M7 13l6-6v6z" fill="#e8eaec" stroke="none"/></svg>
<svg style="left:1442px;top:872px" width="20" height="17" viewBox="0 0 20 17"><path d="M0 2a1 1 0 0 1 1-1h6l2 2h10a1 1 0 0 1 1 1v12a1 1 0 0 1-1 1H1a1 1 0 0 1-1-1z" fill="#e6e8ea"/><circle cx="10" cy="9" r="3.500" fill="none" stroke="#111" stroke-width="1.700"/><path d="M12.500 11.500l2.500 2.500" stroke="#111" stroke-width="1.700"/></svg>

<div class="t" style="left:1470px;top:862px;width:80px;text-align:center;font-size:12.500px;line-height:18px;color:#f0f2f4">8:56</div>
<div class="t" style="left:1470px;top:881px;width:80px;text-align:center;font-size:12.500px;line-height:18px;color:#f0f2f4">2025/12/17</div>
<svg style="left:1558px;top:872px" width="18" height="17" viewBox="0 0 18 17" fill="none" stroke="#f0f2f4" stroke-width="1.200"><path d="M.7.7h16v12h-5l-3 3.300-3-3.300h-5z"/></svg>
<div class="a" style="left:1598px;top:860px;width:2px;height:40px;background:#1a3346"></div>
</body></html>
